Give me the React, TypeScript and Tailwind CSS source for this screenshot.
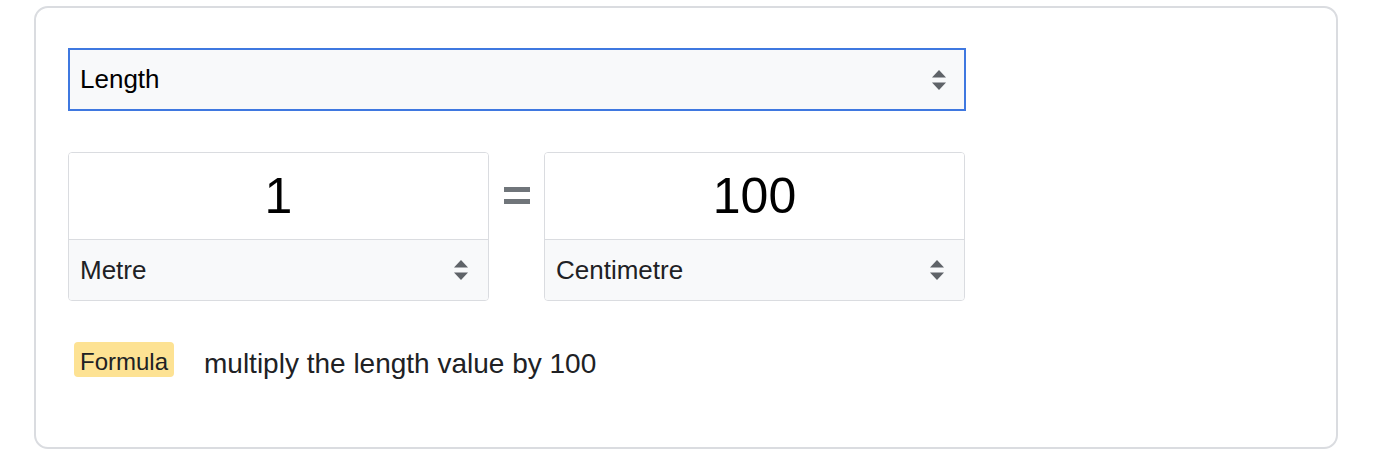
const font = { fontFamily: '"Liberation Sans", Arial, sans-serif' };

function UpDown() {
  return (
    <svg width="14" height="22" viewBox="0 0 14 22" className="shrink-0">
      <path d="M0 8.5 L7 1 L14 8.5 Z" fill="#5f6368" />
      <path d="M0 13.5 L7 21 L14 13.5 Z" fill="#5f6368" />
    </svg>
  );
}

function UnitBox({ value, unit }: { value: string; unit: string }) {
  return (
    <div className="w-[421px] h-[149px] border border-[#dadce0] rounded-[4px] overflow-hidden flex flex-col">
      <div className="h-[86px] bg-white flex items-center justify-center text-[50px] text-black leading-none">
        {value}
      </div>
      <div className="flex-1 border-t border-[#dadce0] bg-[#f8f9fa] flex items-center justify-between pl-[11px] pr-[20px]">
        <span className="text-[26px] text-[#202124]">{unit}</span>
        <UpDown />
      </div>
    </div>
  );
}

export default function App() {
  return (
    <div className="bg-white w-[1380px] h-[464px] pt-[6px] pl-[34px]" style={font}>
      <div className="w-[1304px] h-[443px] border-2 border-[#dadce0] rounded-[14px] px-[32px] pt-[40px]">
        {/* category */}
        <div className="w-[898px] h-[63px] border-2 border-[#3f78e0] bg-[#f8f9fa] flex items-center justify-between pl-[10px] pr-[18px]">
          <span className="text-[26px] text-black">Length</span>
          <UpDown />
        </div>

        {/* units */}
        <div className="mt-[41px] flex items-start">
          <UnitBox value="1" unit="Metre" />
          <div className="w-[55px] h-[86px] flex flex-col items-center justify-center gap-[7px]">
            <div className="w-[26px] h-[5px] bg-[#70757a]" />
            <div className="w-[26px] h-[5px] bg-[#70757a]" />
          </div>
          <UnitBox value="100" unit="Centimetre" />
        </div>

        {/* formula */}
        <div className="mt-[41px] ml-[6px] flex items-start gap-[30px]">
          <span className="w-[100px] h-[35px] rounded-[4px] bg-[#fde293] flex items-center justify-center pt-[4px] text-[24px] text-[#202124]">
            Formula
          </span>
          <span className="mt-[4px] text-[28px] leading-[35px] text-[#202124]">multiply the length value by 100</span>
        </div>
      </div>
    </div>
  );
}
